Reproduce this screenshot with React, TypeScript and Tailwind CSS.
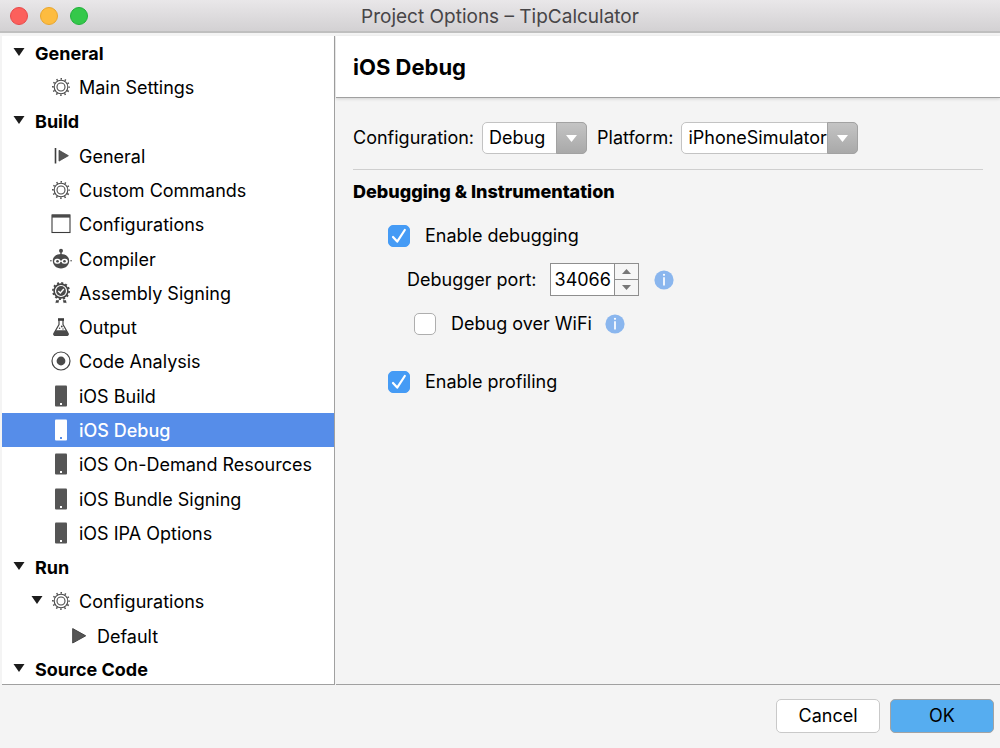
import { useState } from "react";
import type { ReactNode } from "react";

function GearIcon() {
  return (
    <svg width="20" height="20" viewBox="0 0 20 20" fill="none" stroke="#4a4a4a" aria-hidden="true">
      <circle cx="10" cy="10" r="6.800" strokeWidth="1.100" />
      <circle cx="10" cy="10" r="4" strokeWidth="1.100" />
      <circle cx="10" cy="10" r="8.100" strokeWidth="1.800" strokeDasharray="1.400 2.841" strokeDashoffset="0.700" />
    </svg>
  );
}

function StepIcon() {
  return (
    <svg width="20" height="20" viewBox="0 0 20 20" aria-hidden="true">
      <path d="M4.500 2v15.500" stroke="#3f3f3f" strokeWidth="1.600" />
      <path d="M8 4.300v10.800l9.400-5.400z" fill="#555" stroke="#444" strokeWidth="0.800" />
    </svg>
  );
}

function WindowIcon() {
  return (
    <svg width="20" height="20" viewBox="0 0 20 20" aria-hidden="true">
      <rect x="1" y="1" width="18" height="17.500" fill="#fff" stroke="#3c3c3c" strokeWidth="1.100" />
      <rect x="1" y="0.600" width="18" height="3" fill="#4a4a4a" />
    </svg>
  );
}

function RobotIcon() {
  return (
    <svg width="22" height="22" viewBox="0 0 22 22" fill="#4a4a4a" aria-hidden="true">
      <circle cx="11" cy="2.800" r="2" />
      <path d="M10.300 3h1.400v4h-1.400z" />
      <path d="M11 6c5 0 8.200 2.800 8.200 6.800 0 4.300-3.400 7.700-8.200 7.700s-8.200-3.400-8.200-7.700C2.800 8.800 6 6 11 6z" />
      <circle cx="0.900" cy="12.800" r="0.800" />
      <circle cx="21.100" cy="12.800" r="0.800" />
      <rect x="4.200" y="10.800" width="6.200" height="5" rx="2.500" fill="#fff" />
      <rect x="11.600" y="10.800" width="6.200" height="5" rx="2.500" fill="#fff" />
      <path d="M9.500 12.600h3v1.200h-3z" fill="#fff" />
      <circle cx="7.500" cy="13.300" r="1.300" />
      <circle cx="14.500" cy="13.300" r="1.300" />
    </svg>
  );
}

function BadgeIcon() {
  return (
    <svg width="20" height="22" viewBox="0 0 20 22" fill="none" stroke="#444" aria-hidden="true">
      <circle cx="10" cy="9" r="6.900" strokeWidth="1.600" />
      <circle cx="10" cy="9" r="8.100" strokeWidth="1.700" strokeDasharray="2 2.241" />
      <circle cx="10" cy="9" r="4.900" fill="#4a4a4a" stroke="none" />
      <path d="M7.300 9l2 2 3.500-4" stroke="#fff" strokeWidth="1.400" />
      <path d="M5 18.200h3.200l-1 3-1.100-.8-1.600.8zM15 18.200h-3.200l1 3 1.100-.8 1.600.8z" fill="#444" stroke="none" />
    </svg>
  );
}

function FlaskIcon() {
  return (
    <svg width="20" height="20" viewBox="0 0 20 20" aria-hidden="true">
      <path d="M8 3v4.500L3 16.200c-.6 1.200 0 2.100 1 2.100h12c1 0 1.600-.9 1-2.100L12 7.500V3" fill="#fff" stroke="#444" strokeWidth="1.200" />
      <path d="M7 1.200h6v2.600H7z" fill="#3c3c3c" />
      <path d="M4.700 13.300h10.600l2 3.400c.3.900-.2 1.800-1.300 1.800H4c-1.100 0-1.600-.9-1.300-1.800z" fill="#4a4a4a" />
      <circle cx="10.800" cy="9.500" r="0.900" fill="#444" />
      <circle cx="8.600" cy="11.300" r="0.800" fill="#444" />
      <circle cx="12" cy="12" r="0.700" fill="#444" />
    </svg>
  );
}

function TargetIcon() {
  return (
    <svg width="20" height="20" viewBox="0 0 20 20" aria-hidden="true">
      <circle cx="10" cy="10" r="9" fill="#fff" stroke="#444" strokeWidth="1.200" />
      <circle cx="10" cy="10" r="4.400" fill="#4a4a4a" />
    </svg>
  );
}

function PhoneIcon({ inverted = false }: { inverted?: boolean }) {
  return (
    <svg width="20" height="22" viewBox="0 0 20 22" aria-hidden="true">
      <rect x="4" y="0.500" width="12" height="21" rx="1" fill={inverted ? "#fff" : "#555"} />
      <rect x="9" y="18" width="2" height="2" fill={inverted ? "#568de9" : "#fff"} />
    </svg>
  );
}

function PlayIcon() {
  return (
    <svg width="20" height="20" viewBox="0 0 20 20" aria-hidden="true">
      <path d="M3.700 2.600v14.400l13-7.200z" fill="#555" stroke="#444" />
    </svg>
  );
}

function Disclosure() {
  return (
    <svg width="12" height="8" viewBox="0 0 12 8" aria-hidden="true">
      <path d="M0.500 0h11L6 8z" fill="#1c1c1c" />
    </svg>
  );
}

function Group({ children }: { children: ReactNode }) {
  return (
    <li className="flex items-center gap-2.5 pt-px pl-[11px] text-lg font-bold">
      <span className="pb-1">
        <Disclosure />
      </span>
      {children}
    </li>
  );
}

function Item({
  icon,
  label,
  selected = false,
  level = 1,
  open = false,
}: {
  icon: ReactNode;
  label: string;
  selected?: boolean;
  level?: 1 | 2;
  open?: boolean;
}) {
  return (
    <li className={selected ? "grid bg-[#568de9] font-medium text-white" : "grid"}>
      <a
        href="#"
        aria-current={selected ? "page" : undefined}
        className={level === 2 ? "flex items-center pt-0.5 pl-[66px]" : "flex items-center pt-0.5 pl-[29px]"}
      >
        {level === 1 && <span className="w-[19px] pb-1">{open && <Disclosure />}</span>}
        <span className="flex w-[22px] justify-center pb-0.5">{icon}</span>
        <span className="pl-[7px]">{label}</span>
      </a>
    </li>
  );
}

function Combo({ id, label, options, width }: { id: string; label: string; options: string[]; width: string }) {
  return (
    <div className="flex items-center gap-2">
      <label htmlFor={id}>{label}</label>
      <div className={`relative h-8 ${width}`}>
        <select
          id={id}
          className="size-full appearance-none rounded-[5px] border border-[#c3c3c3] bg-white pl-1.5 pr-[30px] text-black"
        >
          {options.map((o) => (
            <option key={o}>{o}</option>
          ))}
        </select>
        <span className="pointer-events-none absolute inset-y-0 right-0 flex w-[31px] items-center justify-center rounded-r-[5px] border border-[#a2a2a2] bg-linear-to-b from-[#c4c4c4] to-[#a9a9a9]">
          <svg width="11" height="7" viewBox="0 0 11 7" aria-hidden="true">
            <path d="M0 0h11L5.500 7z" fill="#fff" />
          </svg>
        </span>
      </div>
    </div>
  );
}

function Check({ label, initial = false }: { label: string; initial?: boolean }) {
  const [on, setOn] = useState(initial);
  return (
    <label className="flex items-center gap-[15px]">
      <span className="relative flex">
        <input
          type="checkbox"
          checked={on}
          onChange={(e) => setOn(e.target.checked)}
          className="size-[22px] appearance-none rounded-[5px] border border-[#aeaeae] bg-white checked:border-[#459bf5] checked:bg-[#459bf5]"
        />
        {on && (
          <svg className="pointer-events-none absolute inset-0" width="22" height="22" viewBox="0 0 22 22" fill="none" aria-hidden="true">
            <path d="M5 12l4.200 4.600L16.800 5" stroke="#fff" strokeWidth="2.200" strokeLinecap="round" strokeLinejoin="round" />
          </svg>
        )}
      </span>
      {label}
    </label>
  );
}

function Info() {
  return (
    <svg width="20" height="20" viewBox="0 0 20 20" role="img" aria-label="Information">
      <circle cx="10" cy="10" r="9.600" fill="#8ab6ee" />
      <path d="M10 7.200v8.300" stroke="#fff" strokeWidth="1.700" />
      <circle cx="10" cy="4.800" r="1.100" fill="#fff" />
    </svg>
  );
}

function Port() {
  const [port, setPort] = useState(34066);
  return (
    <div className="flex items-center">
      <label htmlFor="port" className="pr-[13px]">
        Debugger port:
      </label>
      <div className="mr-[15px] flex h-[33px] border border-[#8e8e8e] bg-white">
        <input
          id="port"
          inputMode="numeric"
          value={port}
          onChange={(e) => setPort(Number(e.target.value) || 0)}
          className="w-[63px] pl-1"
        />
        <div className="flex w-6 flex-col divide-y divide-[#8e8e8e] border-l border-[#8e8e8e] bg-[#f6f6f6]">
          <button type="button" aria-label="Increase" onClick={() => setPort(port + 1)} className="flex flex-1 items-center justify-center">
            <svg width="9" height="5" viewBox="0 0 9 5" aria-hidden="true">
              <path d="M0 5h9L4.500 0z" fill="#777" />
            </svg>
          </button>
          <button type="button" aria-label="Decrease" onClick={() => setPort(port - 1)} className="flex flex-1 items-center justify-center">
            <svg width="9" height="5" viewBox="0 0 9 5" aria-hidden="true">
              <path d="M0 0h9L4.500 5z" fill="#777" />
            </svg>
          </button>
        </div>
      </div>
      <Info />
    </div>
  );
}

export default function App() {
  return (
    <div className="flex min-h-screen flex-col bg-[#f4f4f4] font-['Inter',sans-serif] text-lg leading-6 text-black">
      <header className="grid h-[33px] grid-cols-[1fr_auto_1fr] items-center border-b-2 border-[#bfbfbf] bg-linear-to-b from-[#e9e7e9] to-[#d3d1d3]">
        <div className="flex gap-3 pl-2.5">
          <button type="button" aria-label="Close" className="size-[18px] rounded-full border border-[#e8494a] bg-[#fc605c]" />
          <button type="button" aria-label="Minimize" className="size-[18px] rounded-full border border-[#e9a62c] bg-[#fdbc40]" />
          <button type="button" aria-label="Zoom" className="size-[18px] rounded-full border border-[#1fb03a] bg-[#34c84a]" />
        </div>
        <h1 className="pt-0.5 text-[19px] text-[#474547]">Project Options – TipCalculator</h1>
      </header>

      <div className="flex flex-1 pt-[3px]">
        <nav aria-label="Options" className="ml-0.5 flex w-[333px] shrink-0 flex-col overflow-hidden border-r border-b border-[#a0a0a0] bg-white">
          <ul className="-mb-[3px] grid flex-1 auto-rows-[minmax(34px,1fr)]">
            <Group>General</Group>
            <Item icon={<GearIcon />} label="Main Settings" />
            <Group>Build</Group>
            <Item icon={<StepIcon />} label="General" />
            <Item icon={<GearIcon />} label="Custom Commands" />
            <Item icon={<WindowIcon />} label="Configurations" />
            <Item icon={<RobotIcon />} label="Compiler" />
            <Item icon={<BadgeIcon />} label="Assembly Signing" />
            <Item icon={<FlaskIcon />} label="Output" />
            <Item icon={<TargetIcon />} label="Code Analysis" />
            <Item icon={<PhoneIcon />} label="iOS Build" />
            <Item icon={<PhoneIcon inverted />} label="iOS Debug" selected />
            <Item icon={<PhoneIcon />} label="iOS On-Demand Resources" />
            <Item icon={<PhoneIcon />} label="iOS Bundle Signing" />
            <Item icon={<PhoneIcon />} label="iOS IPA Options" />
            <Group>Run</Group>
            <Item icon={<GearIcon />} label="Configurations" open />
            <Item icon={<PlayIcon />} label="Default" level={2} />
            <Group>Source Code</Group>
          </ul>
        </nav>

        <main className="ml-px flex-1 border-b border-[#a0a0a0]">
          <div className="border-b border-[#a0a0a0] bg-white px-[17px] pt-[17px] pb-4 shadow-[0_1px_3px_rgba(0,0,0,0.15)]">
            <h2 className="text-[22px] leading-7 font-bold">iOS Debug</h2>
          </div>
          <div className="px-[17px] pt-6">
            <div className="flex gap-2.5 border-b border-[#cfcfcf] pb-[15px]">
              <Combo id="configuration" label="Configuration:" options={["Debug", "Release"]} width="w-[105px]" />
              <Combo id="platform" label="Platform:" options={["iPhoneSimulator", "iPhone"]} width="w-[177px]" />
            </div>
            <h3 className="pt-2.5 font-extrabold">Debugging &amp; Instrumentation</h3>
            <div className="flex flex-col pt-5 pl-[35px]">
              <Check label="Enable debugging" initial />
              <div className="pt-[15px] pl-[19px]">
                <Port />
              </div>
              <div className="flex items-center gap-[13px] pt-4 pl-[26px]">
                <Check label="Debug over WiFi" />
                <Info />
              </div>
              <div className="pt-[34px]">
                <Check label="Enable profiling" initial />
              </div>
            </div>
          </div>
        </main>
      </div>

      <footer className="flex justify-end gap-2.5 px-1.5 pt-3.5 pb-[15px]">
        <button type="button" className="h-[34px] w-[104px] rounded-[5px] border border-[#c9c9c9] bg-white">
          Cancel
        </button>
        <button type="button" className="h-[34px] w-[104px] rounded-[5px] border border-[#a3a3a3] bg-[#56adf0]">
          OK
        </button>
      </footer>
    </div>
  );
}
